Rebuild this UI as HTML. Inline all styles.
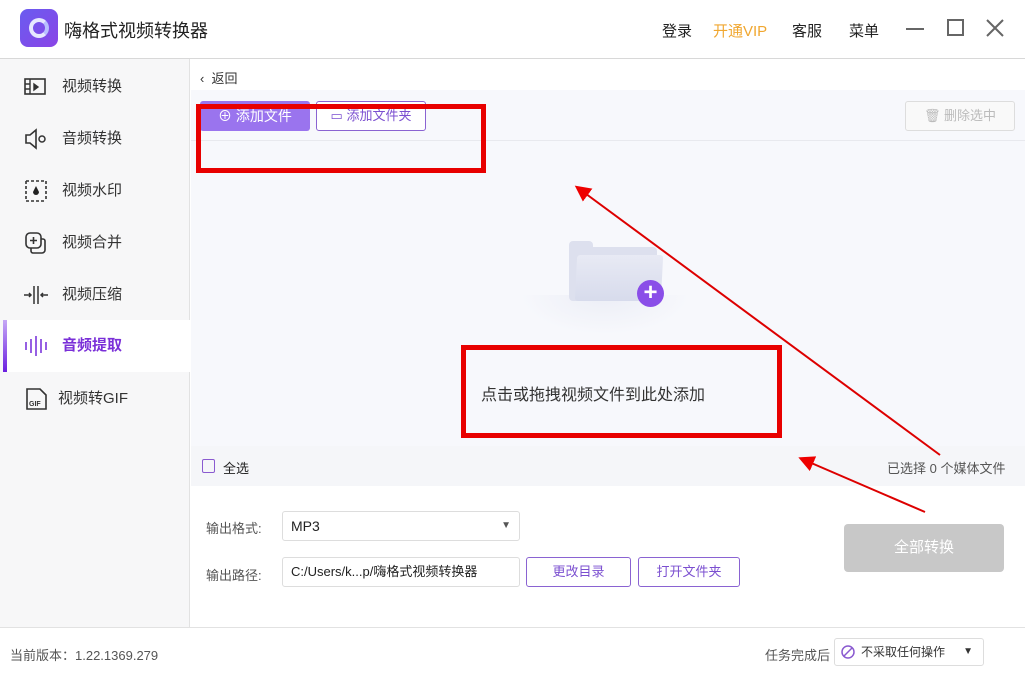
<!DOCTYPE html>
<html><head><meta charset="utf-8"><style>
*{margin:0;padding:0;box-sizing:border-box}
body{width:1025px;height:683px;position:relative;overflow:hidden;background:#fff;font-family:"Liberation Sans","Noto Sans CJK SC",sans-serif;color:#222}
.a{position:absolute}
.side{left:0;top:59px;width:190px;height:568px;background:#f7f7f8;border-right:1px solid #e2e2e2}
.item{position:absolute;left:0;width:188px;height:52px;font-size:15px;color:#333;line-height:52px;padding-left:62px}
.ic{position:absolute;left:24px;top:15px;width:24px;height:22px}
.btn{position:absolute;border:1px solid #8a63d2;border-radius:3px;color:#7b4fd0;font-size:13px;text-align:center;background:#fff}
</style></head><body>
<div class="a" style="left:20px;top:9px;width:38px;height:38px;border-radius:8px;background:linear-gradient(135deg,#6a5cf0,#8a44e6)"></div>
<div class="a" style="left:29px;top:18px;width:20px;height:20px;border-radius:50%;border:4px solid #e6e8ff;border-right-color:#b9c0ff"></div>
<div class="a" style="left:64px;top:17px;font-size:18px;color:#222">嗨格式视频转换器</div>
<div class="a" style="left:662px;top:20px;font-size:15px">登录</div>
<div class="a" style="left:713px;top:20px;font-size:15px;color:#f0a730">开通VIP</div>
<div class="a" style="left:792px;top:20px;font-size:15px">客服</div>
<div class="a" style="left:849px;top:20px;font-size:15px">菜单</div>
<div class="a" style="left:906px;top:28px;width:18px;height:2px;background:#666"></div>
<div class="a" style="left:947px;top:19px;width:17px;height:17px;border:2px solid #666"></div>
<svg class="a" style="left:986px;top:19px" width="18" height="18"><path d="M1 1L17 17M17 1L1 17" stroke="#666" stroke-width="2"/></svg>
<div class="a" style="left:0;top:58px;width:1025px;height:1px;background:#d8d8d8"></div>
<div class="a side"></div>
<div class="item" style="top:61px">视频转换<svg class="ic" viewBox="0 0 24 22"><rect x="1" y="3" width="20" height="15" fill="none" stroke="#333" stroke-width="1.6"/><path d="M6 3v15M1 8h5M1 13h5M10 8l4 3-4 3z" stroke="#333" fill="#333" stroke-width="1.4"/></svg></div>
<div class="item" style="top:113px">音频转换<svg class="ic" viewBox="0 0 24 22"><path d="M2 7h4l6-5v18l-6-5H2z" fill="none" stroke="#333" stroke-width="1.6"/><circle cx="18" cy="11" r="3" fill="none" stroke="#333" stroke-width="1.5"/></svg></div>
<div class="item" style="top:165px">视频水印<svg class="ic" viewBox="0 0 24 22"><path d="M2 1v20M22 1v20M2 1h20M2 21h20" stroke="#333" stroke-width="1.6" stroke-dasharray="3 2"/><path d="M12 6l-3 6a3 3 0 006 0z" fill="#222"/></svg></div>
<div class="item" style="top:217px">视频合并<svg class="ic" viewBox="0 0 24 22"><rect x="2" y="1" width="15" height="15" rx="4" fill="none" stroke="#333" stroke-width="1.6"/><path d="M7 16v3a2 2 0 002 2h9a3 3 0 003-3V9a2 2 0 00-2-2h-2M9.5 5v7M6 8.5h7" fill="none" stroke="#333" stroke-width="1.6"/></svg></div>
<div class="item" style="top:269px">视频压缩<svg class="ic" viewBox="0 0 24 22"><path d="M0 11h7M5 9l2 2-2 2M10 2v18M14 2v18M24 11h-7M19 9l-2 2 2 2" fill="none" stroke="#333" stroke-width="1.5"/></svg></div>
<div class="a" style="left:3px;top:320px;width:187px;height:52px;background:#fff"></div>
<div class="a" style="left:3px;top:320px;width:4px;height:52px;background:linear-gradient(#c6a8f5,#6a1fe0)"></div>
<div class="item" style="top:320px;color:#7a2fd8;font-weight:bold">音频提取<svg class="ic" viewBox="0 0 24 22"><path d="M2 7v8M7 4v14M12 1v20M17 4v14M22 7v8" stroke="#8a4ee0" stroke-width="1.8"/></svg></div>
<div class="item" style="top:373px;padding-left:58px">视频转GIF<svg class="ic" viewBox="0 0 24 24" style="top:14px;height:24px"><path d="M3 2h13l6 6v14H3z" fill="none" stroke="#333" stroke-width="1.6"/><text x="5" y="19" font-size="7" font-weight="bold" fill="#333" font-family="Liberation Sans">GIF</text></svg></div>
<div class="a" style="left:200px;top:68px;font-size:13px;color:#333">&lsaquo;&nbsp; 返回</div>
<div class="a" style="left:191px;top:90px;width:834px;height:356px;background:#f7f8fc"></div>
<div class="a" style="left:191px;top:140px;width:834px;height:1px;background:#e8e9ee"></div>
<div class="a" style="left:200px;top:101px;width:110px;height:30px;background:#9a74ee;border-radius:3px;color:#fff;font-size:14px;line-height:30px;text-align:center">⊕ 添加文件</div>
<div class="btn" style="left:316px;top:101px;width:110px;height:30px;line-height:28px">▭ 添加文件夹</div>
<div class="a" style="left:905px;top:101px;width:110px;height:30px;border:1px solid #ddd;border-radius:3px;color:#bbb;font-size:13px;line-height:28px;text-align:center;background:#f9f9f9">🗑 删除选中</div>
<div class="a" style="left:520px;top:295px;width:170px;height:40px;background:radial-gradient(ellipse at center top,#eceef6,transparent 70%)"></div>
<div class="a" style="left:569px;top:241px;width:24px;height:12px;border-radius:4px 4px 0 0;background:#dde0ee"></div>
<div class="a" style="left:569px;top:247px;width:88px;height:54px;border-radius:4px;background:#dde0ee"></div>
<div class="a" style="left:576px;top:255px;width:86px;height:46px;border-radius:3px;background:linear-gradient(#e8eaf4,#d7dbec);transform:skewX(-3deg)"></div>
<div class="a" style="left:637px;top:280px;width:27px;height:27px;border-radius:50%;background:#8a4ee8;color:#fff;font-size:24px;line-height:26px;text-align:center;font-weight:bold">+</div>
<div class="a" style="left:481px;top:381px;font-size:16px;color:#333">点击或拖拽视频文件到此处添加</div>
<div class="a" style="left:191px;top:446px;width:834px;height:40px;background:#f5f6f9"></div>
<div class="a" style="left:202px;top:459px;width:13px;height:14px;border:1.5px solid #8a5ad0;border-radius:2px"></div>
<div class="a" style="left:223px;top:458px;font-size:13px">全选</div>
<div class="a" style="left:887px;top:458px;font-size:13px;color:#555">已选择 0 个媒体文件</div>
<div class="a" style="left:206px;top:518px;font-size:13px;color:#555">输出格式:</div>
<div class="a" style="left:282px;top:511px;width:238px;height:30px;border:1px solid #ddd;border-radius:3px;font-size:14px;line-height:28px;padding-left:8px">MP3<span style="position:absolute;right:8px;font-size:10px;color:#555">▼</span></div>
<div class="a" style="left:206px;top:565px;font-size:13px;color:#555">输出路径:</div>
<div class="a" style="left:282px;top:557px;width:238px;height:30px;border:1px solid #ddd;border-radius:3px;font-size:13px;line-height:28px;padding-left:8px">C:/Users/k...p/嗨格式视频转换器</div>
<div class="btn" style="left:526px;top:557px;width:105px;height:30px;line-height:28px">更改目录</div>
<div class="btn" style="left:638px;top:557px;width:102px;height:30px;line-height:28px">打开文件夹</div>
<div class="a" style="left:844px;top:524px;width:160px;height:48px;background:#c8c8c8;border-radius:4px;color:#fff;font-size:15px;line-height:48px;text-align:center">全部转换</div>
<div class="a" style="left:0;top:627px;width:1025px;height:1px;background:#e2e2e2"></div>
<div class="a" style="left:10px;top:645px;font-size:13px;color:#555">当前版本：1.22.1369.279</div>
<div class="a" style="left:765px;top:645px;font-size:13px;color:#555">任务完成后</div>
<div class="a" style="left:834px;top:638px;width:150px;height:28px;border:1px solid #ddd;border-radius:3px;font-size:12px;line-height:26px;padding-left:26px;color:#333">不采取任何操作<span style="position:absolute;right:10px;font-size:10px">▼</span>
<svg class="a" style="left:6px;top:6px" width="14" height="14"><circle cx="7" cy="7" r="6" fill="none" stroke="#8a5ad0" stroke-width="1.5"/><path d="M3 11L11 3" stroke="#8a5ad0" stroke-width="1.5"/></svg></div>
<div class="a" style="left:196px;top:104px;width:290px;height:69px;border:5px solid #e80000"></div>
<div class="a" style="left:461px;top:345px;width:321px;height:93px;border:5px solid #e80000"></div>
<svg class="a" style="left:0;top:0" width="1025" height="683"><defs><marker id="m" markerWidth="8" markerHeight="8" refX="6" refY="4" orient="auto"><path d="M0 0L8 4L0 8z" fill="#e00"/></marker></defs>
<path d="M940 455L578 188" stroke="#d00" stroke-width="2" marker-end="url(#m)"/>
<path d="M925 512L802 459" stroke="#d00" stroke-width="2" marker-end="url(#m)"/></svg>
</body></html>
